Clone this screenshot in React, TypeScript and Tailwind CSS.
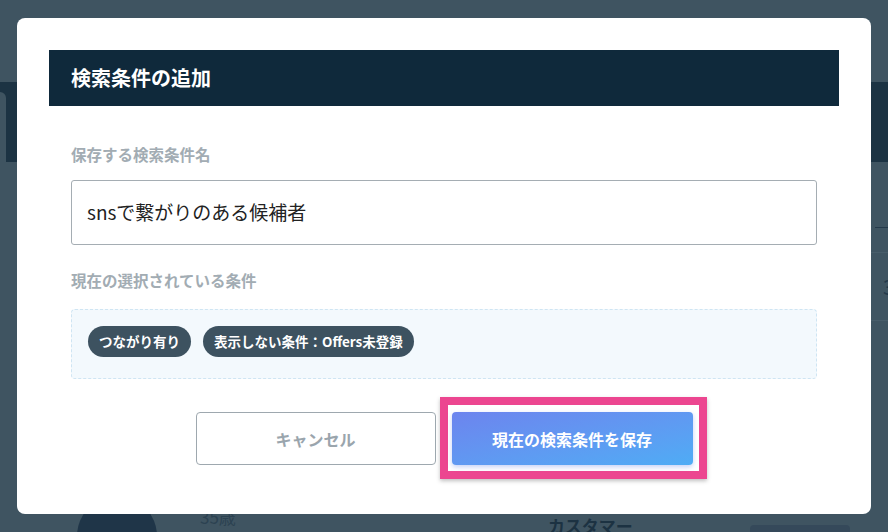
import React from 'react';

const font = { fontFamily: '"Noto Sans CJK JP", "Noto Sans", sans-serif' };

// dimmed page behind the dialog
const Background: React.FC = () => (
  <div className="flex h-[532px] w-[888px] flex-col overflow-hidden bg-[#3f5461]">
    <div className="h-[82px] shrink-0" />
    <div className="flex h-[80px] shrink-0 bg-[#1c3343] pt-[10px]">
      <div className="h-full w-[6px] rounded-tr-md bg-[#3f5461]" />
    </div>
    <div className="flex flex-1 flex-col">
      <div className="flex justify-end">
        <div className="flex w-[17px] flex-col">
          <div className="mt-[65px] h-px w-[13px] self-end bg-[#24394a]" />
          <div className="mt-[24px] h-px bg-[#485d6a]" />
          <div className="flex h-[67px] items-center pl-[12px] text-[20px] leading-none text-[#24394a]">3</div>
          <div className="h-px bg-[#485d6a]" />
        </div>
      </div>
      <div className="mt-auto flex h-[36px] items-start pl-[77px]">
        <div className="h-[80px] w-[80px] shrink-0 rounded-full bg-[#1f3548]" />
        <div className="ml-[43px] mt-[9px] text-[17px] leading-6 text-[#2c4251]">35歳</div>
        <div className="ml-[312px] mt-[18px] text-[17px] font-bold leading-6 text-[#1c3242]">カスタマー</div>
        <div className="ml-[117px] mt-[29px] h-[20px] w-[100px] rounded bg-[#35495a]" />
      </div>
    </div>
  </div>
);

const App: React.FC = () => {
  return (
    <div className="relative h-[532px] w-[888px] overflow-hidden" style={font}>
      <Background />

      <div className="absolute left-[17px] top-[18px] h-[496px] w-[854px] rounded-lg bg-white px-8 pt-8">
        <div className="flex h-[56px] items-center bg-[#0f293b] px-[22px]">
          <h2 className="text-[20px] font-bold text-white">検索条件の追加</h2>
        </div>

        <div className="px-[22px]">
          <div className="mt-[38px] text-[15.5px] font-bold leading-5 text-[#a2acb3]">保存する検索条件名</div>
          <div className="mt-4 flex h-[65px] items-center rounded-[3px] border border-[#a5adb3] px-[15px]">
            <span className="text-[19px] text-[#222]">snsで繋がりのある候補者</span>
          </div>

          <div className="mt-[25px] text-[15.5px] font-bold leading-5 text-[#a2acb3]">現在の選択されている条件</div>
          <div className="mt-[19px] flex h-[70px] items-start gap-3 rounded border border-dashed border-[#cfe5f3] bg-[#f3f9fd] px-4 pt-4">
            <span className="flex h-[31px] items-center rounded-full bg-[#3d5260] px-[11px] text-[13.5px] font-bold text-white">
              つながり有り
            </span>
            <span className="flex h-[31px] items-center rounded-full bg-[#3d5260] px-[11px] text-[13.5px] font-bold text-white">
              表示しない条件：Offers未登録
            </span>
          </div>

          <div className="mt-[33px] flex justify-center gap-4">
            <button className="flex h-[53px] w-[240px] items-center justify-center rounded border border-[#9ea8af] bg-white text-[16px] font-bold text-[#9aa5ad]">
              キャンセル
            </button>
            <div className="relative">
              {/* highlight annotation */}
              <div className="absolute -bottom-[14px] -left-3 -right-[14px] -top-[15px] border-8 border-[#ec4690] shadow-[0_2px_4px_rgba(0,0,0,0.25)]" />
              <button className="relative flex h-[53px] w-[241px] items-center justify-center rounded bg-gradient-to-br from-[#6c84ee] to-[#4eacf5] text-[16px] font-bold text-white shadow-[0_2px_5px_rgba(90,120,230,0.35)]">
                現在の検索条件を保存
              </button>
            </div>
          </div>
        </div>
      </div>
    </div>
  );
};

export default App;
